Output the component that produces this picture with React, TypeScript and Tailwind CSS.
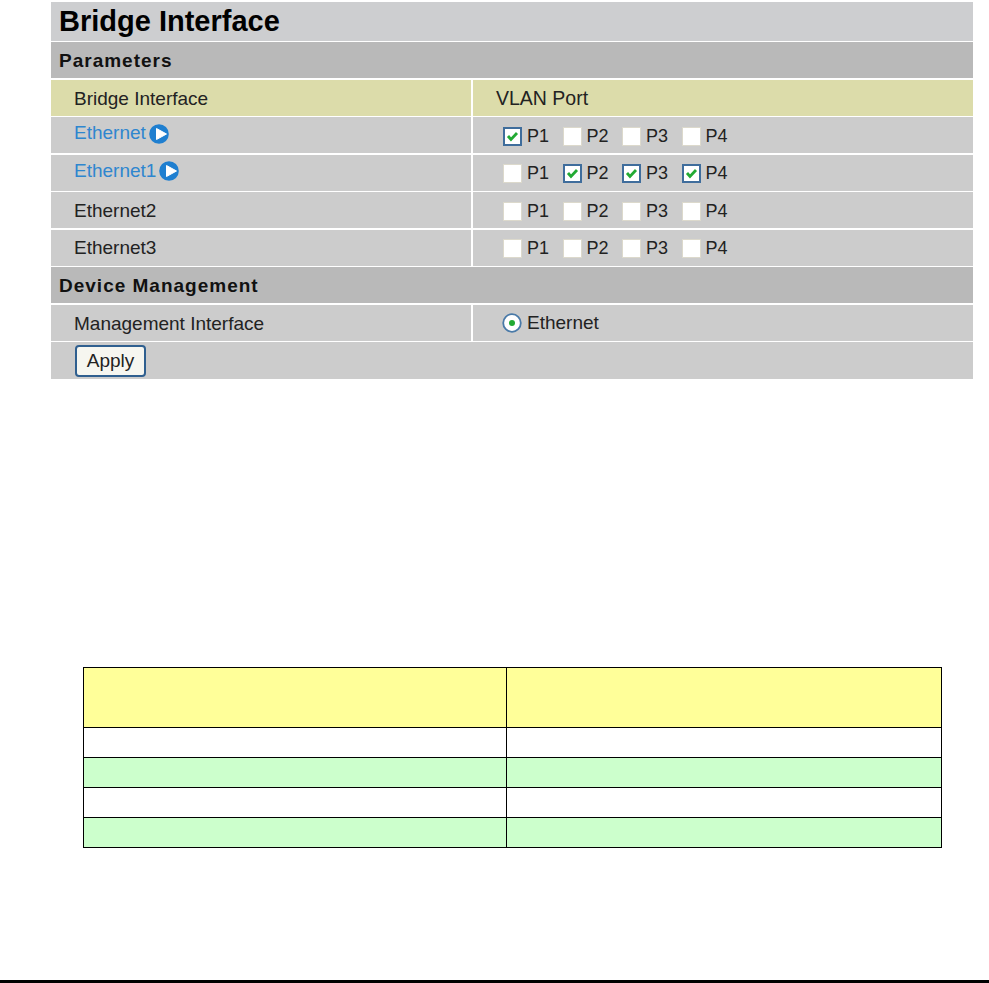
import { Fragment } from "react";
import type { ReactNode } from "react";

const rows = [
  { label: "Ethernet", link: true, ports: [true, false, false, false] },
  { label: "Ethernet1", link: true, ports: [false, true, true, true] },
  { label: "Ethernet2", link: false, ports: [false, false, false, false] },
  { label: "Ethernet3", link: false, ports: [false, false, false, false] },
];

const tableRows = ["bg-white", "bg-[#ccffcc]", "bg-white", "bg-[#ccffcc]"];

function PlayIcon() {
  return (
    <svg width="20" height="20" viewBox="0 0 20 20" className="ml-[3px] shrink-0">
      <circle cx="10" cy="10" r="9.8" fill="#1f7fd0" />
      <path d="M7.5 4.5 L17.5 10 L7.5 15.5 Z" fill="#ffffff" stroke="#ffffff" strokeLinejoin="round" />
    </svg>
  );
}

function Checkbox({ checked }: { checked: boolean }) {
  if (!checked) {
    return <span className="block h-[19px] w-[19px] shrink-0 border border-[#dcd9cc] bg-white" />;
  }
  return (
    <span className="block h-[19px] w-[19px] shrink-0 border-2 border-[#3f6d9c] bg-white">
      <svg width="15" height="15" viewBox="0 0 15 15">
        <path d="M3 7 L6 10.5 L12 4" fill="none" stroke="#22aa33" strokeWidth="2.8" />
      </svg>
    </span>
  );
}

function Row({ left, right, bg = "bg-[#cccccc]" }: { left: ReactNode; right: ReactNode; bg?: string }) {
  return (
    <div className="flex h-[36px] gap-[2px]">
      <div className={`flex w-[420px] items-center pl-[23px] ${bg}`}>{left}</div>
      <div className={`flex flex-1 items-center pl-[23px] ${bg}`}>{right}</div>
    </div>
  );
}

export default function App() {
  return (
    <div className="relative h-[983px] bg-white font-['Liberation_Sans',Arial,sans-serif] text-[#222222]">
      <div className="ml-[51px] flex w-[922px] flex-col gap-[1.5px] pt-[2px] text-[19px]">
        <div className="flex h-[38.5px] items-center bg-[#cdced0] pl-[8px] text-[29px] font-bold text-black">
          Bridge Interface
        </div>
        <div className="flex h-[36px] items-center bg-[#b9b9b9] pl-[8px] pt-[2px] text-[19px] font-bold tracking-[1px] text-[#111111]">
          Parameters
        </div>
        <Row
          bg="bg-[#dcdcaa]"
          left={<span className="pt-[4px]">Bridge Interface</span>}
          right={<span className="pt-[2px] text-[19.5px]">VLAN Port</span>}
        />
        {rows.map((row) => (
          <Fragment key={row.label}>
            <Row
              left={
                row.link ? (
                  <span className="-mt-[3px] flex items-center text-[#2e86cf]">
                    {row.label}
                    <PlayIcon />
                  </span>
                ) : (
                  <span className="pt-[2px]">{row.label}</span>
                )
              }
              right={
                <div className="ml-[7px] flex items-center pt-[2px]">
                  {row.ports.map((on, i) => (
                    <div key={i} className="flex w-[59.5px] items-center gap-[5px]">
                      <Checkbox checked={on} />
                      <span className="text-[18px]">P{i + 1}</span>
                    </div>
                  ))}
                </div>
              }
            />
          </Fragment>
        ))}
        <div className="flex h-[36px] items-center bg-[#b9b9b9] pl-[8px] pt-[2px] text-[19px] font-bold tracking-[1px] text-[#111111]">
          Device Management
        </div>
        <Row
          left={<span className="pt-[4px]">Management Interface</span>}
          right={
            <div className="ml-[6px] flex items-center gap-[5px] pt-[1px]">
              <svg width="20" height="20" viewBox="0 0 20 20">
                <circle cx="10" cy="10" r="8.8" fill="#ffffff" stroke="#4a7aa8" strokeWidth="1.8" />
                <circle cx="10" cy="10" r="3" fill="#22aa33" />
              </svg>
              <span className="pt-[1px]">Ethernet</span>
            </div>
          }
        />
        <div className="flex h-[37px] items-center bg-[#cccccc] pl-[24px]">
          <button className="flex h-[32px] w-[71px] items-center justify-center rounded-[4px] border-2 border-[#2f5f8f] bg-[#f6f6f0] pt-[1px] text-[#222222]">
            Apply
          </button>
        </div>
      </div>

      <div className="ml-[83px] mt-[288px] w-[859px] border border-black">
        <div className="flex h-[59px]">
          <div className="w-[422px] bg-[#ffff99]" />
          <div className="flex-1 border-l border-black bg-[#ffff99]" />
        </div>
        {tableRows.map((bg, i) => (
          <div key={i} className="flex h-[30px] border-t border-black">
            <div className={`w-[422px] ${bg}`} />
            <div className={`flex-1 border-l border-black ${bg}`} />
          </div>
        ))}
      </div>

      <div className="absolute bottom-0 left-0 h-[3px] w-full bg-black" />
    </div>
  );
}
